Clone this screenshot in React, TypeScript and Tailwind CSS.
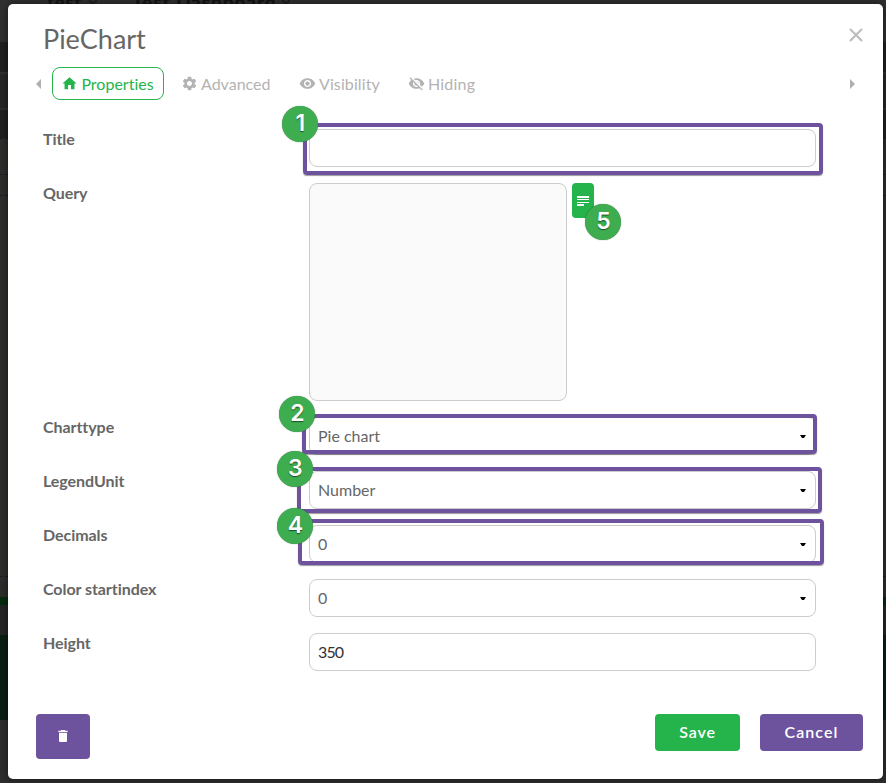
import { ReactNode } from "react";
import { MdHome, MdSettings, MdVisibility, MdVisibilityOff, MdDelete } from "react-icons/md";

const tabClass = "flex items-center gap-[3px] whitespace-nowrap text-[16px] leading-none text-[#b3b3b3]";

function Row({ label, tall, children }: { label: string; tall?: boolean; children?: ReactNode }) {
  return (
    <div className={`flex ${tall ? "h-[234px]" : "h-[54px]"}`}>
      <label className="w-[266px] shrink-0 text-[16px] leading-[20px] font-bold tracking-[-0.06px] text-[#666]">{label}</label>
      {children}
    </div>
  );
}

function Field({ value, select, dark }: { value?: string; select?: boolean; dark?: boolean }) {
  return (
    <div className={`flex h-[38px] w-[507px] items-center justify-between rounded-lg border border-[#ccc] px-2 text-[16px] ${dark ? "tracking-[-0.9px] text-[#333]" : "text-[#666]"}`}>
      <span>{value}</span>
      {select && (
        <svg className="mr-[1px] h-[3px] w-[6px]" viewBox="0 0 6 3"><path d="M0 0h6L4 3H2z" fill="#000" /></svg>
      )}
    </div>
  );
}

function Marker({ n, place }: { n: number; place: string }) {
  return (
    <div className={`absolute flex size-[36px] items-center justify-center rounded-full bg-[#3dad4f] font-[Inter,sans-serif] text-[23px] leading-none font-semibold text-white shadow-[0_0_1px_rgba(0,0,0,0.6)] [text-shadow:0_1px_1px_rgba(0,0,0,0.55)] ${place}`}>
      {n}
    </div>
  );
}

function Outline({ place }: { place: string }) {
  return <div className={`absolute rounded-[4px] border-4 border-[#6d539e] shadow-[0_1px_1px_rgba(0,0,0,0.4)] ${place}`} />;
}

export default function App() {
  return (
    <div className="relative h-[783px] w-[886px] overflow-hidden bg-[#2d2d2d] pt-1 pl-2 font-[Lato,sans-serif] [font-variant-ligatures:none]">
      <div className="absolute top-0 left-0 h-[783px] w-[886px]">
        <div className="h-[42px] bg-[#303030]" />
        <div className="h-[30px] bg-[#202020]" />
        <div className="h-[36px] border-t-2 border-[#303030] bg-[#262626]" />
        <div className="h-[30px] border-t-2 border-[#303030] bg-[#202020]" />
        <div className="h-[36px] border-t border-dashed border-[#1c1c1c] bg-[#2d2d2c]" />
        <div className="h-[21px] border-t border-dashed border-[#1c1c1c] bg-[#2d2d2c]" />
        <div className="h-[381px] border-t border-dashed border-[#1c1c1c] bg-[#2d2d2c]" />
        <div className="h-[21px] border-t border-dashed border-[#1c1c1c] bg-[#2d2d2c]" />
        <div className="h-[8px] bg-[#052b0d]" />
        <div className="h-[30px] bg-[#252525]" />
        <div className="h-[85px] bg-[#0a1f12]" />
      </div>
      <div className="absolute top-[-7px] left-[47px] flex items-center text-[19px] leading-[18px] font-black text-[#141414]">
        <span className="w-[42px] tracking-[0.5px]">test</span>
        <svg className="h-[5px] w-[8px]" viewBox="0 0 8 5"><path d="M0 0l4 4 4-4" fill="none" stroke="#1b1b1b" strokeWidth="1.5" /></svg>
        <span className="ml-[35px] w-[150px] tracking-[0.9px] whitespace-nowrap">Test Dashboard</span>
        <svg className="h-[5px] w-[8px]" viewBox="0 0 8 5"><path d="M0 0l4 4 4-4" fill="none" stroke="#1b1b1b" strokeWidth="1.5" /></svg>
      </div>
      <main className="relative flex h-[775px] w-[875px] flex-col rounded-[5px] bg-white shadow-[0_0_8px_rgba(0,0,0,0.5)]">
        <header className="flex h-[61px] justify-between pt-[18px] pr-[20px] pl-[35px]">
          <h1 className="text-[27px] leading-[34px] text-[#666]">PieChart</h1>
          <svg className="mt-[6px] size-[14px]" viewBox="0 0 14 14"><path d="M1 1l12 12M13 1L1 13" stroke="#bbb" strokeWidth="2" /></svg>
        </header>
        <nav className="flex h-[37px] items-center pr-[28px] pl-[28px]">
          <svg className="h-[10px] w-[5px]" viewBox="0 0 5 10"><path d="M5 0v10L0 5z" fill="#b0b0b0" /></svg>
          <div className="mb-[1px] ml-[11px] flex h-[33px] w-[112px] items-center justify-center gap-[3px] rounded-lg border border-[#25b34b] pr-px text-[16px] text-[#25b34b]">
            <MdHome size={17} className="mt-px" /><span className="pt-px">Properties</span>
          </div>
          <div className={`${tabClass} ml-[17px] w-[118px]`}><MdSettings size={17} /><span>Advanced</span></div>
          <div className={`${tabClass} w-[109px]`}><MdVisibility size={17} /><span className="tracking-[0.1px]">Visibility</span></div>
          <div className={tabClass}><MdVisibilityOff size={17} /><span className="tracking-[0.2px]">Hiding</span></div>
          <svg className="ml-auto h-[10px] w-[5px]" viewBox="0 0 5 10"><path d="M0 0v10l5-5z" fill="#b0b0b0" /></svg>
        </nav>
        <section className="flex flex-col pt-[27px] pl-[35px]">
          <Row label="Title"><Field /></Row>
          <Row label="Query" tall>
            <div className="h-[218px] w-[258px] rounded-lg border border-[#ccc] bg-[#fafafa]" />
            <button className="ml-[5px] flex h-[35px] w-[22px] items-center justify-center rounded bg-[#25b34b]">
              <svg className="h-[10px] w-[12px]" viewBox="0 0 12 10"><path d="M0 0h12v2H0zM0 3h12v1H0zM0 6h12v1H0zM0 8h7v2H0z" fill="#fff" /></svg>
            </button>
          </Row>
          <Row label="Charttype"><Field value="Pie chart" select /></Row>
          <Row label="LegendUnit"><Field value="Number" select /></Row>
          <Row label="Decimals"><Field value="0" select /></Row>
          <Row label="Color startindex"><Field value="0" select /></Row>
          <Row label="Height"><Field value="350" dark /></Row>
        </section>
        <footer className="mt-auto mb-[20px] flex h-[45px] items-start pr-[20px] pl-[28px]">
          <button className="flex h-[45px] w-[54px] items-center justify-center rounded bg-[#6d539e] pr-[1px] pb-[1px] text-white"><MdDelete size={16} /></button>
          <button className="ml-auto h-[37px] w-[85px] rounded bg-[#25b34b] pb-px text-[16px] font-semibold tracking-[0.9px] text-white">Save</button>
          <button className="ml-[20px] h-[37px] w-[103px] rounded bg-[#6d539e] pb-px text-[16px] font-semibold tracking-[1.1px] text-white">Cancel</button>
        </footer>
      </main>
      <Outline place="top-[123px] left-[303px] h-[52px] w-[520px]" />
      <Outline place="top-[414px] left-[302px] h-[40px] w-[515px]" />
      <Outline place="top-[467px] left-[297px] h-[46px] w-[525px]" />
      <Outline place="top-[519px] left-[298px] h-[46px] w-[526px]" />
      <Marker n={1} place="top-[105.5px] left-[282.4px]" />
      <Marker n={5} place="top-[203.5px] left-[585.4px]" />
      <Marker n={2} place="top-[395.5px] left-[279.4px]" />
      <Marker n={3} place="top-[450.5px] left-[277.4px]" />
      <Marker n={4} place="top-[507.5px] left-[277.4px]" />
    </div>
  );
}
